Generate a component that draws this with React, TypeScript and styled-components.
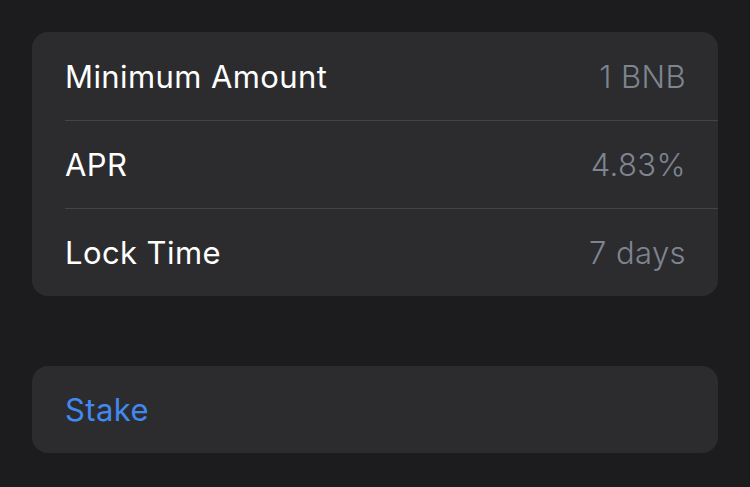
import React from "react";
import styled, { createGlobalStyle } from "styled-components";

const GlobalStyle = createGlobalStyle`
  html, body {
    margin: 0;
    padding: 0;
    background: #1c1c1e;
  }
  body {
    font-family: Inter, "Noto Sans", sans-serif;
    -webkit-font-smoothing: antialiased;
  }
`;

const Page = styled.main`
  display: flex;
  flex-direction: column;
  gap: 70px;
  padding: 32px;
  width: 750px;
  height: 487px;
  box-sizing: border-box;
`;

const Card = styled.section`
  background: #2c2c2e;
  border-radius: 16px;
  overflow: hidden;
`;

const Row = styled.div`
  display: flex;
  align-items: center;
  justify-content: space-between;
  height: 88px;
  margin-left: 33px;
  padding-right: 32px;
  box-sizing: border-box;
  & + & {
    border-top: 1px solid #444447;
  }
`;

const Label = styled.span`
  font-size: 31px;
  font-weight: 400;
  color: #ffffff;
  letter-spacing: 0.4px;
`;

const Value = styled.span`
  font-size: 31px;
  font-weight: 350;
  color: #7e8591;
  letter-spacing: 0.4px;
`;

const Action = styled.button`
  display: flex;
  align-items: center;
  width: 100%;
  height: 87px;
  padding: 0 0 0 33px;
  border: none;
  background: none;
  font-family: inherit;
  font-size: 31px;
  color: #4189f0;
  cursor: pointer;
  letter-spacing: 0.4px;
`;

const details = [
  { label: "Minimum Amount", value: "1 BNB" },
  { label: "APR", value: "4.83%" },
  { label: "Lock Time", value: "7 days" },
];

export default function App() {
  return (
    <>
      <GlobalStyle />
      <Page>
        <Card>
          {details.map((d) => (
            <Row key={d.label}>
              <Label>{d.label}</Label>
              <Value>{d.value}</Value>
            </Row>
          ))}
        </Card>
        <Card>
          <Action>Stake</Action>
        </Card>
      </Page>
    </>
  );
}
